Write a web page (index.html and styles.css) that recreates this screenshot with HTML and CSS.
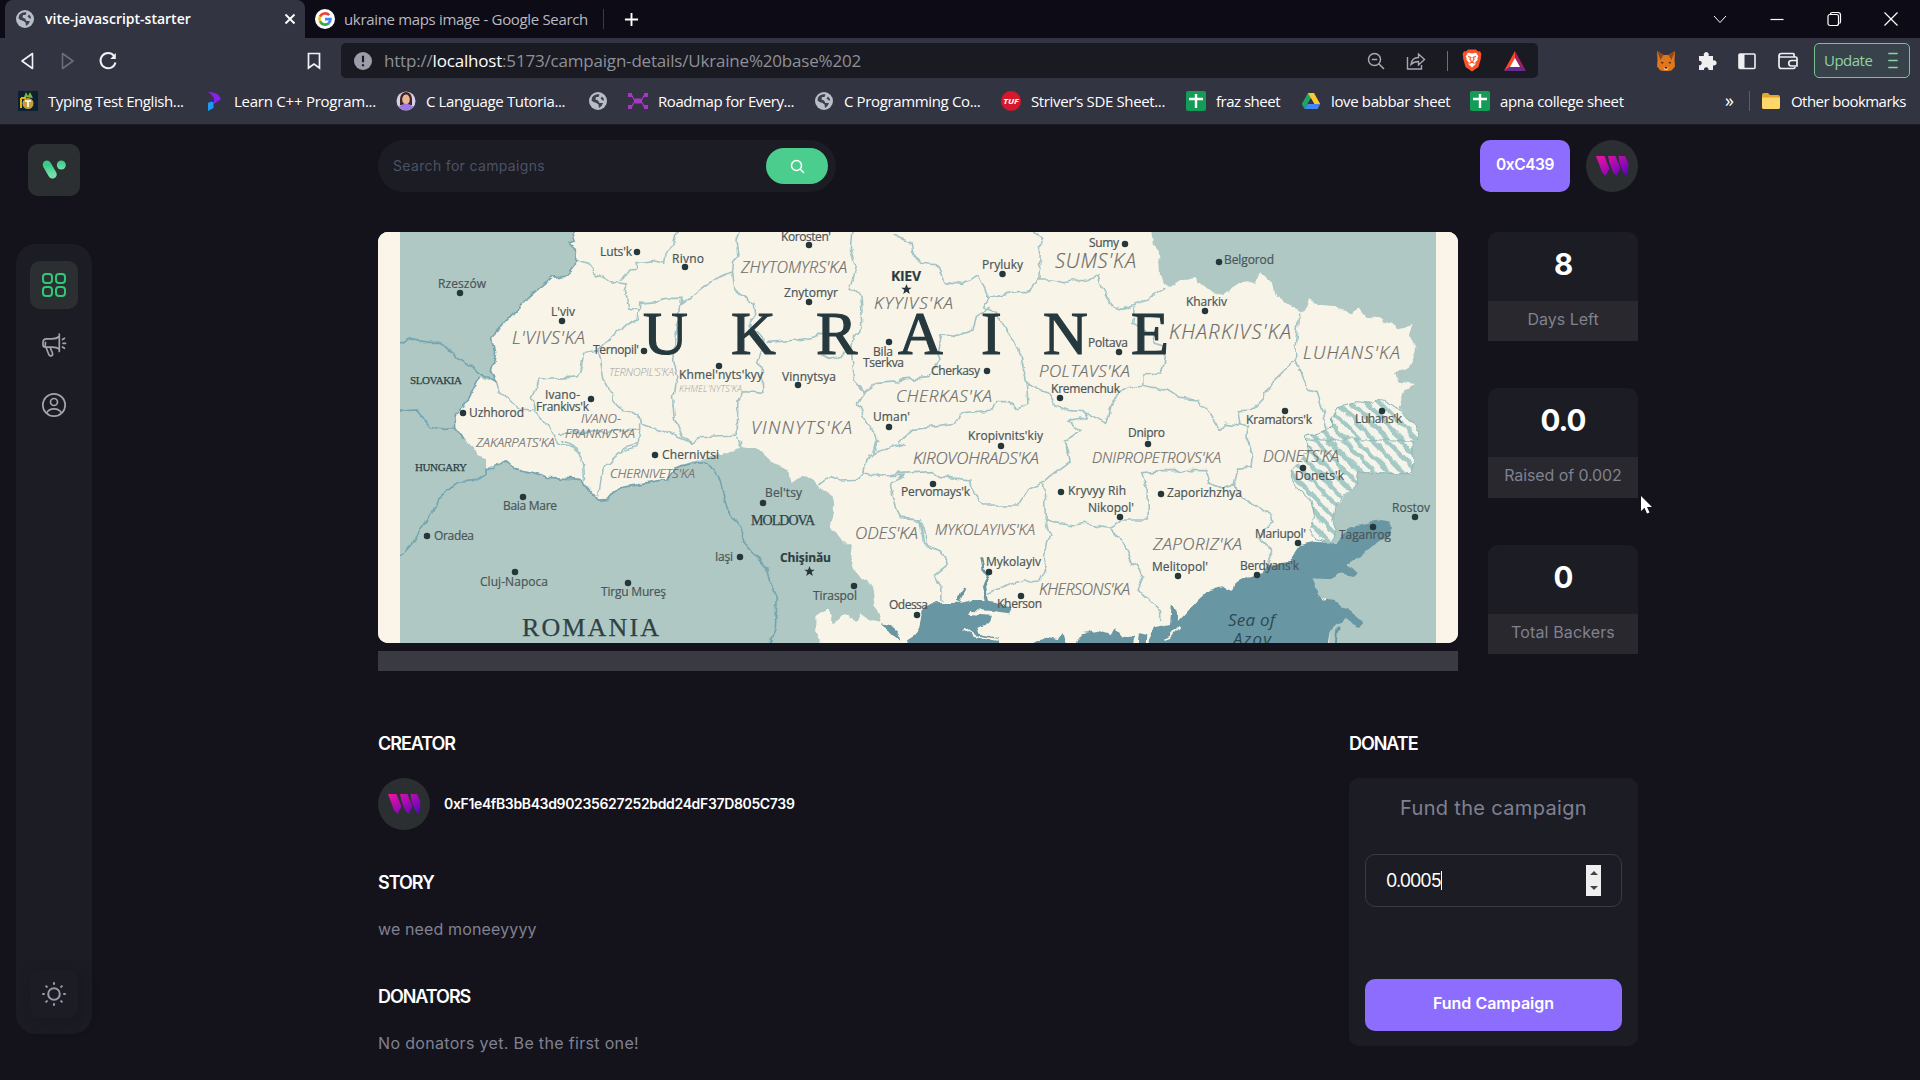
FILE: index.html
```html
<!DOCTYPE html>
<html lang="en">
<head>
<meta charset="utf-8">
<title>vite-javascript-starter</title>
<link rel="stylesheet" href="styles.css">
</head>
<body>
<svg class="defs" aria-hidden="true">
  <defs>
    <linearGradient id="pink" x1="0" y1="0" x2="1" y2="1"><stop offset="0" stop-color="#f213a4"/><stop offset="1" stop-color="#5204bf"/></linearGradient>
    <linearGradient id="mint" x1="0" y1="0" x2="0" y2="1"><stop offset="0" stop-color="#38ca85"/><stop offset="1" stop-color="#6ee0a8"/></linearGradient>
    <symbol id="globe" viewBox="0 0 18 18"><circle cx="9" cy="9" r="9" fill="#b9bdc6"/><path d="M3 5.500C5 2.500 8 2 10.500 2.500L9.500 5H7l-.5 2.500L9 8.500l1.500 2.500H14L12.500 14 10 16l-.5-3.500L7.500 11 4.500 10 2.500 8.500zM11.500 6.500l1.500-2 2 2.500-.5 2z" fill="#3d4050"/></symbol>
    <symbol id="sheet" viewBox="0 0 20 20"><rect width="20" height="20" rx="2" fill="#139c56"/><path d="M10 3v14M3 8h14" stroke="#fff" stroke-width="2.400"/></symbol>
    <symbol id="web3" viewBox="0 0 34 22"><path d="M1 1h8.500l5 12.500L10.500 21 7 17zM13 1h7.500l5 12.500L21.500 21 18 17 14.500 8zM23.500 1H30l3.500 8-1.500 12-4-4-3.500-9z" fill="url(#pink)"/></symbol>
  </defs>
</svg>

<header class="browser">
  <div class="tabstrip">
    <div class="tab tab-active">
      <svg class="i18" viewBox="0 0 18 18"><use href="#globe"/></svg>
      <span class="tab-title">vite-javascript-starter</span>
      <svg class="tab-close" viewBox="0 0 12 12"><path d="M1.500 1.500l9 9M10.500 1.500l-9 9" stroke="#fff" stroke-width="1.900"/></svg>
    </div>
    <div class="tab tab-other">
      <svg class="i20" viewBox="0 0 20 20"><circle cx="10" cy="10" r="10" fill="#fff"/><g fill="none" stroke-width="2.600"><path d="M14.200 6.200A5.600 5.600 0 0 0 5 7.600" stroke="#ea4335"/><path d="M5 7.500a5.600 5.600 0 0 0 0 5" stroke="#fbbc05"/><path d="M5 12.400a5.600 5.600 0 0 0 8.800 1.800" stroke="#34a853"/><path d="M10 10.100h5.500a5.600 5.600 0 0 1-1.900 4.200" stroke="#4285f4"/></g></svg>
      <span class="tab-title tab-muted">ukraine maps image - Google Search</span>
    </div>
    <svg class="newtab" viewBox="0 0 16 16"><path d="M8 1v14M1 8h14" stroke="#fff" stroke-width="2"/></svg>
    <div class="winbtns">
      <svg viewBox="0 0 16 16"><path d="M2 5l6 6.500L14 5" stroke-width="1"/></svg>
      <svg viewBox="0 0 16 16"><path d="M1.500 8.500h13"/></svg>
      <svg viewBox="0 0 16 16"><rect x="2" y="3.500" width="10.500" height="11" rx="2"/><path d="M4.500 3.300C4.500 2 5 1.500 6.500 1.500H12q2.500 0 2.500 2.500v6.500q0 1.500-1 2"/></svg>
      <svg viewBox="0 0 16 16"><path d="M1.500 1.500l13 13M14.500 1.500l-13 13"/></svg>
    </div>
  </div>

  <div class="toolbar">
    <div class="nav">
      <svg viewBox="0 0 20 20" stroke="#f2f2f5"><path d="M14.500 2.500v15L4 10z"/></svg>
      <svg viewBox="0 0 20 20" stroke="#6b6d79"><path d="M4.500 2.500v15L15 10z"/></svg>
      <svg viewBox="0 0 20 20" stroke="#f2f2f5"><path d="M16 4.800A7.600 7.600 0 1 0 17.500 11.500" stroke-width="2"/><path d="M17.800 2v6h-5.500z" fill="#f2f2f5" stroke="none"/></svg>
    </div>
    <svg class="bookmark" viewBox="0 0 14 18"><path d="M1.500 1.500h11v14.500L7 12l-5.500 4z"/></svg>
    <div class="address">
      <svg class="i18" viewBox="0 0 18 18"><circle cx="9" cy="9" r="9" fill="#9b9ea8"/><path d="M9 3.800v6.400M9 12.300v2" stroke="#1a1b22" stroke-width="2.200"/></svg>
      <span class="url">http://<b>localhost</b>:5173/campaign-details/Ukraine%20base%202</span>
      <svg class="i18 zoomout" viewBox="0 0 18 18" fill="none" stroke="#a7a9b2" stroke-width="1.500"><circle cx="7.500" cy="7.500" r="6"/><path d="M4.800 7.500h5.400M12 12l5 5"/></svg>
      <svg class="i20" viewBox="0 0 20 20" fill="none" stroke="#a7a9b2" stroke-width="1.400"><path d="M1.500 6v12h14v-4"/><path d="M5 13.500C5.500 9 8 6.500 12.500 6.500V3l6 5.500-6 5.500v-3.500C9 10.500 7 11.500 5 13.500z"/></svg>
      <i class="bar"></i>
      <svg class="brave" viewBox="0 0 20 23"><path d="M6 .5h8l2 2 2-.3 1.500 3-.7 2L19 9l-2.500 9L10 22.500 3.500 18 1 9l.2-1.800-.7-2L2 2.200l2 .3z" fill="#fb542b"/><path d="M10 4.500l4-.8 2.300 3.500-1 2.300.3 1.500-2.600 2.500.7 1.500-3.700 3.500L6.300 15l.7-1.500L4.400 11l.3-1.500-1-2.300L6 3.700z" fill="#fff"/><path d="M6 7.500l2.800.8L8 10.500 10 13l2-2.500-.8-2.200L14 7.500M7.500 14.500L10 13l2.500 1.500" stroke="#fb542b" stroke-width="1.200" fill="none"/></svg>
      <svg class="bat" viewBox="0 0 22 20"><path d="M11 0L0 20l11-7z" fill="#ff4724"/><path d="M11 0l11 20-11-7z" fill="#9e1f63"/><path d="M0 20h22l-11-8z" fill="#662d91"/><path d="M11 7l5 9H6z" fill="#fff"/></svg>
    </div>
    <div class="exts">
      <svg viewBox="0 0 20 20"><path d="M1 0l6.500 4h5L19 0l-.5 9L19 15.500l-3.500 4L12 20H8l-3.500-.5L1 15.500 1.500 9z" fill="#e2761b"/><path d="M1 0l6.500 4L4.500 9zM19 0l-6.500 4 3 5z" fill="#8a4a1c"/><path d="M5 10.500l3 1.500-2.500.5zM15 10.500L12 12l2.500.5z" fill="#2b1a10"/><path d="M7.500 16h5l-1 3h-3z" fill="#d8c7b8"/><path d="M8.500 16h3l-.5 1.500H9z" fill="#222"/></svg>
      <svg viewBox="0 0 20 20"><path d="M2 5h5a2.600 2.600 0 1 1 4.500 0H16v4.500a2.600 2.600 0 1 1 0 4.800V19h-4.500a2.300 2.300 0 1 0-4.500 0H2v-4.800a2.300 2.300 0 1 0 0-4.500z" fill="#f0f0f3"/></svg>
      <svg viewBox="0 0 20 20"><rect x="2" y="3" width="16" height="14.500" rx="1" fill="none" stroke="#f0f0f3" stroke-width="1.600"/><path d="M2 3h5.500v14.500H2z" fill="#f0f0f3"/></svg>
      <svg viewBox="0 0 20 20" fill="none" stroke="#f0f0f3" stroke-width="1.700"><path d="M16 6V3.500Q16 2.500 14.500 2.500H3.500Q1 2.500 1 5v10q0 2.500 2.500 2.500h12q1.500 0 1.500-1.500M1.500 6H17.500q1.500 0 1.500 1.500v2M19 9.500h-5.500a2.700 2.700 0 0 0 0 5.500H19z"/></svg>
    </div>
    <div class="update"><span class="update-text">Update</span><svg viewBox="0 0 12 18"><path d="M1 1.500h10M1 9h10M1 16.500h10" stroke="#8fd3a1" stroke-width="1.600"/></svg></div>
  </div>

  <div class="bookmarks">
    <div class="bm"><svg viewBox="0 0 20 20"><rect width="20" height="20" fill="#0c2230"/><path d="M6 6l2-5 2 4 2-4 3 6z" fill="#7db343"/><path d="M3 7v10M3 7h5" stroke="#e0b21c" stroke-width="2"/><circle cx="10" cy="12.500" r="5.500" fill="#c79c3c"/><path d="M7 10h6M10 10v6" stroke="#fff" stroke-width="1.600"/></svg><span class="b1">Typing Test English...</span></div>
    <div class="bm"><svg viewBox="0 0 20 20"><path d="M4 1c7 0 11 2 13 7l-7 5V8C9 5 7 3 4 1z" fill="#8422e8"/><path d="M10 7v6H5v-2z" fill="#3c14d8"/><path d="M4 12c3-2 5-1 5.500-1V17L4 20z" fill="#1a9bf0"/></svg><span class="b2">Learn C++ Program...</span></div>
    <div class="bm"><svg viewBox="0 0 20 20"><circle cx="10" cy="10" r="9.500" fill="#d8cfe6"/><path d="M4 8a6 7 0 0 1 12 0v6H4z" fill="#3d2523"/><ellipse cx="10" cy="8.500" rx="3.800" ry="5" fill="#eab595"/><path d="M2.500 15.500Q10 10 17.500 15.500A9.500 9.500 0 0 1 2.500 15.500z" fill="#9a78e8"/></svg><span class="b3">C Language Tutoria...</span></div>
    <div class="bm"><svg viewBox="-1 -1 20 20"><use href="#globe" width="18" height="18"/></svg></div>
    <div class="bm"><svg viewBox="0 0 20 20"><path d="M3 3l4 7-4 7M17 3l-4 7 4 7M6 10h8" stroke="#b53ad0" stroke-width="1.100" fill="none"/><path d="M0 2h4v4H0zM0 14h4v4H0zM16 2h4v4h-4zM16 14h4v4h-4zM7 7.500h6v5H7z" fill="#a834c8"/></svg><span class="b5">Roadmap for Every...</span></div>
    <div class="bm"><svg viewBox="-1 -1 20 20"><use href="#globe" width="18" height="18"/></svg><span class="b6">C Programming Co...</span></div>
    <div class="bm"><svg viewBox="0 0 20 20"><circle cx="10" cy="10" r="10" fill="#d6182c"/><text x="2.300" y="12.500" class="tuf" textLength="15.500" lengthAdjust="spacingAndGlyphs">TUF</text></svg><span class="b7">Striver’s SDE Sheet...</span></div>
    <div class="bm"><svg viewBox="0 0 20 20"><use href="#sheet"/></svg><span class="b8">fraz sheet</span></div>
    <div class="bm"><svg viewBox="0 0 20 20"><path d="M7 2h6l-6.500 11L3.500 18 .8 13z" fill="#1fa463"/><path d="M7 2h6l6.200 11h-6z" fill="#fcc934"/><path d="M3.500 18l3-5h12.700l-2.700 5z" fill="#4285f4"/><path d="M10 7.500L6.800 13h6.400z" fill="#333442"/></svg><span class="b9">love babbar sheet</span></div>
    <div class="bm"><svg viewBox="0 0 20 20"><use href="#sheet"/></svg><span class="b10">apna college sheet</span></div>
    <div class="bm bm-more">»</div>
    <div class="bm bm-other"><svg viewBox="0 0 20 20"><path d="M1 4q0-2 2-2h4l2 2h8q2 0 2 2v10q0 2-2 2H3q-2 0-2-2z" fill="#e0a92e"/><path d="M1 6.500h18V16q0 2-2 2H3q-2 0-2-2z" fill="#ffd768"/></svg><span class="b11">Other bookmarks</span></div>
  </div>
</header>

<div class="app">
  <aside class="side">
    <div class="tile logo"><svg width="24" height="20" viewBox="0 0 24 20"><path d="M5 4.800l5.500 9.500" stroke="url(#mint)" stroke-width="8.500" stroke-linecap="round"/><circle cx="19.300" cy="5" r="4.500" fill="url(#mint)"/></svg></div>
    <nav class="rail">
      <div class="tile active"><svg width="26" height="26" viewBox="0 0 26 26" fill="none" stroke="#2ec878" stroke-width="2"><rect x="2" y="2" width="9" height="9" rx="3"/><rect x="15" y="2" width="9" height="9" rx="3"/><rect x="2" y="15" width="9" height="9" rx="3"/><rect x="15" y="15" width="9" height="9" rx="3"/></svg></div>
      <div class="tile"><svg width="26" height="26" viewBox="0 0 26 26" fill="none" stroke="#a3a3ad" stroke-width="1.700" stroke-linecap="round" stroke-linejoin="round"><path d="M18.300 2v17.500M18.300 4.500C16 6.500 14 6.800 11 6.800H5.500Q2 6.800 2 10.500V13M18.300 17c-2-1.500-4-1.800-7-1.800H5.500M2 13c0 1.500 1 2.200 2.500 2.200M4.500 10.300l-.3 4M5 15.200l2.700 7q1 2.300 2.800 1.500 1.700-.8.900-2.700l-2.300-5.600M21.500 7.500l2-1.200M22 11.300h2.500M21.500 15l2 1.300"/></svg></div>
      <div class="tile"><svg width="26" height="26" viewBox="0 0 26 26" fill="none" stroke="#a3a3ad" stroke-width="1.700"><circle cx="13" cy="13" r="11.200"/><circle cx="13" cy="10" r="3.500"/><path d="M5.500 21Q7.500 16.800 13 16.800T20.500 21"/></svg></div>
      <div class="tile sun"><svg width="26" height="26" viewBox="0 0 26 26" fill="none" stroke="#9a99a8" stroke-width="2" stroke-linecap="round"><circle cx="13" cy="13" r="5.800"/><path d="M13 2v1M13 23v1M2 13h1M23 13h1M5.200 5.200l.7.7M20.100 20.100l.7.7M20.800 5.200l-.7.7M5.900 20.100l-.7.700"/></svg></div>
    </nav>
  </aside>

  <main class="main">
    <div class="top">
      <div class="search"><span class="placeholder">Search for campaigns</span><div class="search-btn"><svg width="15" height="15" viewBox="0 0 15 15" fill="none" stroke="#fff" stroke-width="1.500" stroke-linecap="round"><circle cx="6.500" cy="6.500" r="5"/><path d="M10.300 10.300l3.200 3.200"/></svg></div></div>
      <div class="wallet">0xC439</div>
      <div class="avatar"><svg viewBox="0 0 34 22"><use href="#web3"/></svg></div>
    </div>

    <div class="hero">
      <div class="hero-left">
        <svg class="map" viewBox="378 232 1080 411" preserveAspectRatio="none">
          <defs>
            <pattern id="hatch" width="29" height="29" patternUnits="userSpaceOnUse" patternTransform="rotate(-42)"><rect width="29" height="29" fill="#f5f4ea"/><rect width="13" height="29" fill="#a5cac6"/></pattern>
            <filter id="rough" x="0" y="0" width="1" height="1"><feTurbulence type="fractalNoise" baseFrequency=".09" numOctaves="2" seed="4"/><feDisplacementMap in="SourceGraphic" scale="7" xChannelSelector="R" yChannelSelector="G"/></filter>
          </defs>
          <rect x="378" y="232" width="1080" height="411" fill="#f8f4e8"/>
          <g filter="url(#rough)">
            <rect x="378" y="232" width="1080" height="411" fill="#f8f4e8"/>
            <g transform="translate(370 220) scale(.35714 .33333)">
              <path class="foreign" d="M60 20H565L572 60 558 66 575 95 572 135 552 165 510 172 440 235 395 290 343 350 352 400 340 455 355 490 310 470 300 485 265 560 238 590 240 625 270 670 292 700H60z"/>
              <path class="frontier" d="M60 380L110 355 160 370 200 370 240 410 280 440 330 470 355 490M60 575L130 570 165 620 210 628 238 625M565 37L572 60 558 66 575 95 572 135 552 165 510 172 440 235 395 290 343 350 352 400 340 455 355 490M310 470L300 485 265 560 238 590 240 625 270 670"/>
              <path class="oblast" d="M575 120L615 130 630 160 680 190 718 195 712 210 725 265 755 270 745 300 700 330 655 370 640 390 598 397 592 440 580 470 478 480 452 530 460 570 500 625 530 670 565 680 590 700M355 490L362 515 395 545 425 568 455 570M700 185L722 150 750 148 748 128 790 122 825 130 830 90 850 75 862 30M755 270V250L800 245 830 235 870 235 872 255 960 180 1015 155 1018 125 1030 110 1025 60 1035 30M1015 155L1022 210 1075 250 1080 280 1060 310 1100 360 1100 385 1085 430 1098 440 1100 520 1050 515 1030 545 1028 645M1110 367L1200 360 1245 350 1260 340 1330 345M870 235L862 300 850 420 862 470 850 530 855 600 875 650 905 665M640 390L655 480 685 540 710 575 755 580 760 610 820 630 860 650 905 670 920 650 1028 645 1040 690M1350 30L1345 90 1362 140 1345 205 1375 230 1380 320 1350 355 1345 395 1355 480 1385 515 1365 550 1385 600 1410 640 1420 690M1345 395L1290 415 1265 405M1385 515L1420 490 1480 485 1500 478M530 640L755 630 750 680 715 690M755 630V610"/>
            </g>
            <g transform="translate(900 220) scale(.3635 .33333)">
              <path class="foreign" d="M690 20L695 70 712 90 715 160 740 205 775 180 815 178 850 210 890 222 930 190 975 185 995 160 1025 190 1035 225 1075 260 1100 275 1115 265 1125 235 1160 255 1190 258 1240 280 1262 265 1280 290 1320 295 1370 325 1410 312 1400 345 1418 385 1400 440 1365 460 1375 485 1418 492 1385 515 1372 560 1405 600 1430 635 1412 700H1500V20z"/>
              <path class="occupied" d="M1320 535L1300 550 1255 545 1205 560 1190 590 1190 620 1175 630 1115 650 1125 700H1412L1430 635 1405 600 1372 565z"/>
              <path class="oblast" d="M-15 45L30 65 35 100 60 130 105 135 120 185 170 190 215 165 230 200 245 232 320 215 350 215 382 180 388 50 360 30M382 180L420 180 450 188 500 178 520 182 545 165 555 200 585 260 610 268 660 250 730 205M245 232L230 260 270 285 290 330 330 390 340 450 350 490 355 550 315 565 300 545 265 545 255 570 170 578 150 610 40 625 -5 670M245 262L210 290 200 330 155 350 115 345 105 400 110 420 75 470 0 478M350 490L410 520 430 560 470 572 510 575 570 610 580 560 600 515 665 495 735 510 770 535 820 540 855 585 880 630 895 610 935 615 930 572 965 570 1000 530 1020 490 1088 420 1090 380 1100 280M510 575L515 590 465 605 495 630 455 665 465 700M645 260L640 310 690 340 700 370 730 380 725 430 715 462 668 465 668 495M1090 420L1120 510 1148 518 1165 580 1175 630M935 615L955 620 955 660 968 700"/>
            </g>
            <g transform="translate(370 440) scale(.35714 .33333)">
              <path class="foreign" d="M60 0H265L290 20 300 45 325 55 325 85 345 85 380 60 405 85 440 95 500 112 590 118 610 145 640 180 665 178 690 145 830 122 850 85 900 65 950 50 1000 42 1040 25 1090 30 1125 65 1170 90 1180 125 1220 105 1250 130 1270 155 1295 160 1300 200 1288 255 1320 310 1350 310 1345 350 1360 400 1410 440 1415 500 1435 545 1400 540 1375 520 1360 545 1325 520 1295 550 1285 508 1250 525 1250 570 1262 600 1255 640H60z"/>
              <path class="frontier" d="M60 370L92 340 115 315 130 280 155 245 185 200 190 180 240 130 290 125 325 100 325 85 345 85 380 60 405 85 440 95 500 112 590 118 610 145 640 180 665 178 690 145 830 122 850 85 920 65 950 75 980 120 1000 210 1040 265 1050 310 1110 385 1120 430 1140 480 1135 560 1115 630"/>
              <path class="oblast" d="M540 0L580 25 595 75 598 120M640 170L650 90 690 50 720 18 755 10M1040 0V22M1420 0L1410 40 1385 65 1380 95 1370 118 1320 120 1290 110 1258 135M1380 95L1430 108 1500 105 1455 125 1465 170 1485 235 1540 240 1555 290 1560 320M1410 40L1500 10"/>
              <path class="water" d="M1435 550L1455 555 1480 580 1490 605 1475 592 1445 570z"/>
            </g>
            <g transform="translate(900 440) scale(.3635 .33333)">
              <path class="foreign" d="M1412 0L1410 98 1262 98 1255 135 1200 190 1190 240 1200 270 1190 310 1100 330 1130 420 1150 470 1210 500 1180 570 1175 640H1500V0z"/>
              <path class="water" d="M690 640L690 580 700 565 740 555 745 500 760 510 765 545 820 480 850 450 895 440 915 450 920 430 955 410 1000 400 1010 375 1070 365 1100 315 1140 305 1200 310 1235 260 1320 240 1350 245 1350 290 1315 305 1270 345 1225 375 1260 395 1245 408 1215 400 1185 418 1135 415 1150 460 1165 485 1190 478 1240 515 1275 545 1265 558 1225 540 1200 550 1180 570 1170 640zM5 640L50 560 60 510 90 490 165 488 200 480 235 480 310 500 300 520 250 512 190 510 185 525 250 530 245 550 210 560 215 580 270 595 280 640zM360 640L370 608 400 590 440 598 450 582 462 640zM485 640V605L500 580 545 572 580 585 590 565 610 590 648 590 640 640zM655 640L660 580 680 585 678 640z"/>
              <path class="occupied" d="M1115 0L1130 30 1070 95 1090 140 1130 180 1140 230 1125 270 1150 300 1190 310 1200 270 1190 240 1200 185 1255 135 1262 98 1410 98 1412 0z"/>
              <path class="river" d="M222 355L228 390 245 400 230 440 238 485M160 485L180 445M1205 560L1200 620"/>
              <path class="spit" d="M175 565L205 588 270 600M768 560L745 590 725 598"/>
              <path class="oblast" d="M-30 105L0 100 90 95 110 110 195 120 200 155 230 195 325 195 350 150 395 128 415 108 465 70 455 0M395 128L398 180 400 240 440 248 480 255 510 250 575 262 610 240 680 240 680 150 665 98 720 92 840 92 850 130 890 145 920 135 930 85 965 80 970 50 955 0M920 135L945 175 1025 225 1028 250 985 290 1025 330 1010 375M575 262L615 305 640 370 670 410 655 450 690 490 720 510 720 540M400 240L412 290 395 345 405 375 385 420 325 425 240 460M0 235L55 240 65 310 115 335 130 375 95 405 115 440 115 485"/>
            </g>
          </g>
          <path d="M378 232h22v411h-22zM1436 232h22v411h-22z" fill="#faf5e8"/>
          <g class="obl">
            <text x="512" y="344" textLength="73" font-size="18">L'VIVS'KA</text><text x="741" y="272.500" textLength="106" font-size="16">ZHYTOMYRS'KA</text><text x="874" y="309" textLength="79" font-size="17">KYYIVS'KA</text>
            <text x="609" y="376" textLength="65" font-size="11" class="pale">TERNOPIL'S'KA</text><text x="679" y="392" textLength="63" font-size="9" class="pale">KHMEL'NYTS'KA</text><text x="581" y="423" textLength="40" font-size="13">IVANO-</text><text x="565" y="438" textLength="70" font-size="13">FRANKIVS'KA</text>
            <text x="476" y="446.500" textLength="79" font-size="13">ZAKARPATS'KA</text><text x="751" y="434" textLength="101" font-size="18">VINNYTS'KA</text><text x="896" y="401.500" textLength="96" font-size="17">CHERKAS'KA</text><text x="1055" y="268" textLength="81" font-size="20">SUMS'KA</text>
            <text x="1169" y="339" textLength="122" font-size="20">KHARKIVS'KA</text><text x="1303" y="359" textLength="97" font-size="18">LUHANS'KA</text><text x="1039" y="377" textLength="91" font-size="17">POLTAVS'KA</text><text x="610" y="477.500" textLength="85" font-size="13">CHERNIVETS'KA</text>
            <text x="855" y="538.500" textLength="63" font-size="17">ODES'KA</text><text x="913" y="464" textLength="126" font-size="17">KIROVOHRADS'KA</text><text x="1092" y="463" textLength="129" font-size="15">DNIPROPETROVS'KA</text><text x="1263" y="461.500" textLength="76" font-size="16">DONETS'KA</text>
            <text x="935" y="535" textLength="100" font-size="15">MYKOLAYIVS'KA</text><text x="1153" y="550" textLength="89" font-size="17">ZAPORIZ'KA</text><text x="1039" y="595" textLength="91" font-size="16">KHERSONS'KA</text>
          </g>
          <text class="title" y="354" x="643 731 816 898 981 1043 1131">UKRAINE</text>
          <g class="city">
            <text x="438" y="287.500" textLength="48">Rzeszów</text><text x="469" y="416.500" textLength="55">Uzhhorod</text><text x="551" y="316" textLength="24">L'viv</text><text x="600" y="256" textLength="32">Luts'k</text><text x="672" y="262.500" textLength="32">Rivno</text><text x="781" y="240.500" textLength="50">Korosten'</text><text x="784" y="297" textLength="54">Znytomyr</text>
            <text x="891" y="280.500" textLength="30" class="cap kiev">KIEV</text><text x="593" y="354" textLength="46">Ternopil'</text><text x="679" y="378.500" textLength="84">Khmel'nyts'kyy</text><text x="782" y="380.500" textLength="54">Vinnytsya</text><text x="873" y="356" textLength="20">Bila</text><text x="863" y="367" textLength="41">Tserkva</text><text x="545" y="398.500" textLength="35">Ivano-</text><text x="536" y="411" textLength="53">Frankivs'k</text><text x="873" y="421" textLength="37">Uman'</text>
            <text x="982" y="268.500" textLength="41">Pryluky</text><text x="1089" y="247" textLength="30">Sumy</text><text x="1224" y="263.500" textLength="50">Belgorod</text><text x="1186" y="305.500" textLength="41">Kharkiv</text><text x="1088" y="346.500" textLength="40">Poltava</text><text x="931" y="375" textLength="49">Cherkasy</text><text x="1051" y="392.500" textLength="69">Kremenchuk</text><text x="1246" y="423.500" textLength="66">Kramators'k</text><text x="1355" y="423" textLength="47">Luhans'k</text><text x="968" y="439.500" textLength="75">Kropivnits'kiy</text><text x="1128" y="436.500" textLength="37">Dnipro</text>
            <text x="503" y="510" textLength="54">Baia Mare</text><text x="434" y="539.500" textLength="40">Oradea</text><text x="480" y="585.500" textLength="68">Cluj-Napoca</text><text x="601" y="596" textLength="65">Tirgu Mureş</text><text x="662" y="458.500" textLength="57">Chernivtsi</text><text x="765" y="497" textLength="37">Bel'tsy</text><text x="715" y="561" textLength="18">Iaşi</text><text x="780" y="562" textLength="51" class="cap">Chişinău</text><text x="813" y="599.500" textLength="44">Tiraspol</text><text x="889" y="608.500" textLength="39">Odessa</text>
            <text x="1295" y="480" textLength="49">Donets'k</text><text x="901" y="495.500" textLength="69">Pervomays'k</text><text x="1068" y="494.500" textLength="58">Kryvyy Rih</text><text x="1088" y="511.500" textLength="46">Nikopol'</text><text x="1167" y="496.500" textLength="75">Zaporizhzhya</text><text x="1255" y="537.500" textLength="51">Mariupol'</text><text x="1339" y="538.500" textLength="52">Taganrog</text><text x="1392" y="512" textLength="38">Rostov</text><text x="986" y="566" textLength="55">Mykolayiv</text><text x="1152" y="570.500" textLength="56">Melitopol'</text><text x="1240" y="570" textLength="59">Berdyans'k</text><text x="997" y="607.500" textLength="45">Kherson</text>
          </g>
          <g class="state"><text x="410" y="384" textLength="52" font-size="11">SLOVAKIA</text><text x="415" y="471" textLength="52" font-size="11">HUNGARY</text><text x="751" y="524.500" textLength="64" font-size="14">MOLDOVA</text><text x="522" y="636" textLength="137" font-size="26">ROMANIA</text></g>
          <g class="sea"><text x="1228" y="626" textLength="47">Sea of</text><text x="1233" y="645" textLength="38">Azov</text></g>
          <path class="dots" d="M460 293h0M463 413h0M562 321h0M637 252h0M685 267h0M809 245h0M809 302h0M644 351h0M719 366h0M798 385h0M889 342h0M591 399h0M889 427h0M1002.500 274h0M1125 244h0M1219 262h0M1205 311h0M1119 352h0M987 371h0M1060 398h0M1285 411h0M1382 411h0M1001 446h0M1148 444h0M523 497h0M427 536h0M515 572h0M628 583h0M655 455h0M763 503h0M740 557h0M854 586h0M917 615h0M1303 468h0M933 484h0M1061 492h0M1120 517h0M1161 494h0M1298 543h0M1373 527h0M1415 517h0M989 572h0M1021 596h0M1178 576h0M1257 575h0"/>
          <path fill="#26373b" d="M906.500 284l1.400 3.700h3.800l-3 2.400 1.100 3.900-3.300-2.300-3.300 2.300 1.100-3.900-3-2.400h3.800zM809.500 566l1.400 3.700h3.800l-3 2.400 1.100 3.900-3.300-2.300-3.300 2.300 1.100-3.900-3-2.400h3.800z"/>
        </svg>
        <div class="progress"></div>
      </div>
      <div class="stats">
        <div class="stat"><div class="num">8</div><div class="lbl">Days Left</div></div>
        <div class="stat"><div class="num">0.0</div><div class="lbl raised">Raised of 0.002</div></div>
        <div class="stat"><div class="num">0</div><div class="lbl backers">Total Backers</div></div>
      </div>
    </div>

    <div class="detail">
      <div class="info">
        <section><h4>CREATOR</h4><div class="creator"><div class="avatar"><svg viewBox="0 0 34 22"><use href="#web3"/></svg></div><span class="hash">0xF1e4fB3bB43d90235627252bdd24dF37D805C739</span></div></section>
        <section class="story"><h4>STORY</h4><p class="about">we need moneeyyyy</p></section>
        <section class="donators"><h4>DONATORS</h4><p>No donators yet. Be the first one!</p></section>
      </div>
      <div class="donate">
        <h4>DONATE</h4>
        <div class="card">
          <p class="fund">Fund the campaign</p>
          <div class="field"><span class="amount">0.0005</span><i class="caret"></i><div class="spin"><i class="up"></i><i class="down"></i></div></div>
          <div class="cta">Fund Campaign</div>
        </div>
      </div>
    </div>
  </main>
</div>
<svg class="cursor" width="13" height="20" viewBox="0 0 13 20"><path d="M1 1v15l3.500-3.200L7 18.500l2.500-1L7 12h5z" fill="#fff"/></svg>
</body>
</html>
```
FILE: styles.css
```css
* { box-sizing: border-box; }
body { margin: 0; width: 1920px; height: 1080px; overflow: hidden; background: #14131b; font-family: Inter, "Liberation Sans", sans-serif; color: #fff; }
h4, p { margin: 0; font-weight: 400; }
svg { display: block; flex: none; }
span { white-space: nowrap; }
.defs { position: absolute; width: 0; height: 0; }

/* browser frame */
.browser { height: 125px; background: #333442; border-bottom: 1px solid #1c1c26; font-family: "Open Sans", "Noto Sans", sans-serif; }
.i18 { width: 18px; height: 18px; }
.i20 { width: 20px; height: 20px; }
.tabstrip { display: flex; height: 38px; padding-left: 5px; background: #0d0b16; align-items: center; }
.tab { display: flex; align-items: center; height: 38px; width: 299px; padding: 0 9px 0 10px; }
.tab-active { width: 300px; padding: 0 9px 0 11px; background: #333442; border-radius: 8px 8px 0 0; }
.tab-other { height: 20px; border-right: 1px solid #3b3a47; }
.tab-title { margin: 0 0 1px 11px; font-size: 14px; line-height: 20px; font-weight: 600; flex: 1; }
.tab-muted { font-weight: 400; color: #b9b8c0; margin-left: 9px; font-size: 15px; letter-spacing: -.330px; }
.tab-close { width: 12px; height: 12px; }
.newtab { width: 15px; height: 15px; margin-left: 20px; }
.winbtns { display: flex; gap: 41px; margin-left: auto; padding-right: 21px; }
.winbtns svg { width: 16px; height: 16px; fill: none; stroke: #fff; stroke-width: 1.200; }
.toolbar { display: flex; align-items: center; height: 45px; padding: 0 10px 0 18px; }
.nav { display: flex; gap: 20px; }
.nav svg { width: 20px; height: 20px; fill: none; stroke-width: 1.600; stroke-linejoin: round; }
.bookmark { width: 14px; height: 18px; margin-left: 189px; fill: none; stroke: #f2f2f5; stroke-width: 1.700; }
.address { display: flex; align-items: center; width: 1197px; height: 35px; margin-left: 20px; padding: 0 12px 0 13px; border-radius: 5px; background: #1a1b22; }
.url { margin: 0 0 1px 12px; font-size: 17px; color: #8e9099; flex: 1; letter-spacing: -.190px; }
.url b { font-weight: 400; color: #fff; }
.zoomout { margin-right: 21px; }
.bar { width: 1px; height: 20px; margin: 0 14px 0 21px; background: #6d6f7a; }
.brave { width: 20px; height: 23px; }
.bat { width: 22px; height: 20px; margin-left: 22px; }
.exts { display: flex; gap: 20.500px; margin-left: 118px; }
.exts svg { width: 20px; height: 20px; }
.update { display: flex; align-items: center; justify-content: space-between; width: 96px; height: 35px; margin-left: auto; padding: 0 10px 0 9px; border: 1.500px solid #7cc290; border-radius: 5px; background: #37424b; color: #8fd3a1; font-size: 15px; letter-spacing: -.500px; }
.update-text { margin-bottom: 2px; }
.update svg { width: 12px; height: 17px; }
.bookmarks { display: grid; grid-template-columns: 186px 192px 192px 40px 186px 187px 185px 115px 169px 249px 30px 1fr; height: 36px; padding-left: 18px; align-items: center; font-size: 15px; letter-spacing: -.360px; }
.bm { display: flex; align-items: center; gap: 10px; white-space: nowrap; }
.bm svg { width: 20px; height: 20px; }
.bm span { margin-bottom: 1px; }
.bm-more { padding: 0 0 3px 6px; font-size: 18px; }
.bm-other { height: 20px; padding-left: 11px; border-left: 1px solid #5c5d6a; }
.b1 { letter-spacing: -.410px; }
.b2 { letter-spacing: -.240px; }
.b5 { letter-spacing: -.440px; }
.b8 { letter-spacing: -.500px; }
.b11 { letter-spacing: -.550px; }
.tuf { font: italic 700 7px "Open Sans", sans-serif; fill: #fff; letter-spacing: 0; }

/* application */
.app { display: flex; height: 955px; }
.side { width: 378px; flex: none; padding: 19px 0 0 16px; }
.tile { display: flex; align-items: center; justify-content: center; width: 48px; height: 48px; border-radius: 10px; }
.logo { width: 52px; height: 52px; margin-left: 12px; background: #2c2f32; }
.rail { display: flex; flex-direction: column; align-items: center; gap: 12px; width: 76px; height: 790px; margin-top: 48px; padding: 17px 0 16px; border-radius: 20px; background: #1c1c24; }
.active { background: #2c2f32; }
.sun { margin-top: auto; background: #1c1c24; box-shadow: 4px 4px 14px #17171e; }
.main { width: 1260px; padding-top: 15px; }
.top { display: flex; align-items: center; height: 52px; }
.search { display: flex; align-items: center; width: 458px; height: 52px; padding: 0 8px 0 15px; border-radius: 26px; background: #1c1c24; }
.placeholder { flex: 1; margin-bottom: 1px; font-size: 14px; letter-spacing: .340px; color: #4b5264; }
.search-btn { display: flex; align-items: center; justify-content: center; width: 62px; height: 36px; border-radius: 20px; background: #4acd8d; }
.wallet { width: 90px; height: 52px; margin: 0 16px 0 auto; border-radius: 10px; background: #8c6dfd; font-size: 15.500px; font-weight: 600; line-height: 49px; letter-spacing: -.450px; text-align: center; }
.avatar { display: flex; align-items: center; justify-content: center; width: 52px; height: 52px; border-radius: 50%; background: #2c2f32; }
.avatar svg { width: 34px; height: 22px; }
.hero { display: flex; justify-content: space-between; margin-top: 40px; }
.map { width: 1080px; height: 411px; border-radius: 10px; }
.progress { height: 20px; margin-top: 8px; background: #3a3a43; }
.stats { width: 150px; display: flex; flex-direction: column; gap: 47px; }
.stat { text-align: center; }
.num { height: 69px; border-radius: 10px 10px 0 0; background: #1c1c24; font-size: 29.500px; font-weight: 700; line-height: 65px; letter-spacing: -1px; }
.lbl { height: 40.300px; background: #28282e; color: #808191; font-size: 16px; line-height: 37px; }
.raised { letter-spacing: -.100px; }
.backers { letter-spacing: .130px; }

/* campaign map */
.foreign { fill: #afc8c4; }
.water { fill: #6896a2; }
.occupied { fill: url(#hatch); stroke: #8ab5b6; stroke-width: 1; vector-effect: non-scaling-stroke; }
.frontier, .oblast, .river, .spit { fill: none; vector-effect: non-scaling-stroke; }
.frontier { stroke: #76a5af; stroke-width: 1.700; }
.oblast { stroke: #a3c4c6; stroke-width: 1.600; }
.river { stroke: #6896a2; stroke-width: 3; }
.spit { stroke: #f8f4e8; stroke-width: 2; }
.map text { font-family: "Open Sans", "Noto Sans", sans-serif; }
.obl text { font-style: italic; font-weight: 300; fill: #6c6b69; stroke: #6c6b69; stroke-width: .200; }
.obl .pale { fill: #a19f9a; stroke: none; }
.city text { font-size: 12px; fill: #4b5557; stroke: #4b5557; stroke-width: .200; }
.city .cap { font-weight: 700; fill: #2b3b3f; }
.city .kiev { font-size: 14px; }
.map .title { font-family: "Liberation Serif", serif; font-size: 62px; fill: #26393e; stroke: #26393e; stroke-width: 1.200; }
.state text { font-family: "Liberation Serif", serif; fill: #2e4144; stroke: #2e4144; stroke-width: .250; }
.sea text { font-size: 17px; font-style: italic; fill: #2c4a54; }
.dots { fill: none; stroke: #26373b; stroke-width: 6.500; stroke-linecap: round; }

/* details */
.detail { display: flex; justify-content: space-between; margin-top: 62px; }
h4 { font-size: 18px; font-weight: 600; line-height: 22px; letter-spacing: -1.050px; }
.creator { display: flex; align-items: center; gap: 14px; margin-top: 23px; }
.hash { margin-bottom: 1px; font-size: 14px; font-weight: 600; letter-spacing: -.350px; }
.story { margin-top: 42px; }
.donators { margin-top: 45px; }
.info p { margin-top: 23px; font-size: 16px; line-height: 24px; letter-spacing: .330px; color: #808191; }
.info .about { letter-spacing: .130px; }
.donate { width: 289px; }
.card { height: 268px; margin-top: 23px; padding: 15px 16px 16px; border-radius: 10px; background: #1c1c24; }
.fund { font-size: 20px; line-height: 30px; letter-spacing: .330px; text-align: center; color: #808191; }
.field { display: flex; align-items: center; height: 53px; margin-top: 31px; padding: 0 20px; border: 1px solid #3a3a43; border-radius: 10px; font-size: 18px; }
.amount { margin-bottom: 1px; letter-spacing: -1px; }
.caret { width: 1px; height: 19px; background: #fff; }
.spin { display: flex; flex-direction: column; align-items: center; justify-content: space-around; width: 15px; height: 31px; margin-left: auto; background: #efefef; }
.up, .down { border: 4px solid transparent; }
.up { border-top: 0; border-bottom: 4px solid #444; }
.down { border-bottom: 0; border-top: 4px solid #444; }
.cta { height: 52px; margin-top: 72px; border-radius: 10px; background: #8c6dfd; font-size: 16px; font-weight: 600; line-height: 49px; text-align: center; }
.cursor { position: absolute; left: 1640px; top: 495px; }
```
